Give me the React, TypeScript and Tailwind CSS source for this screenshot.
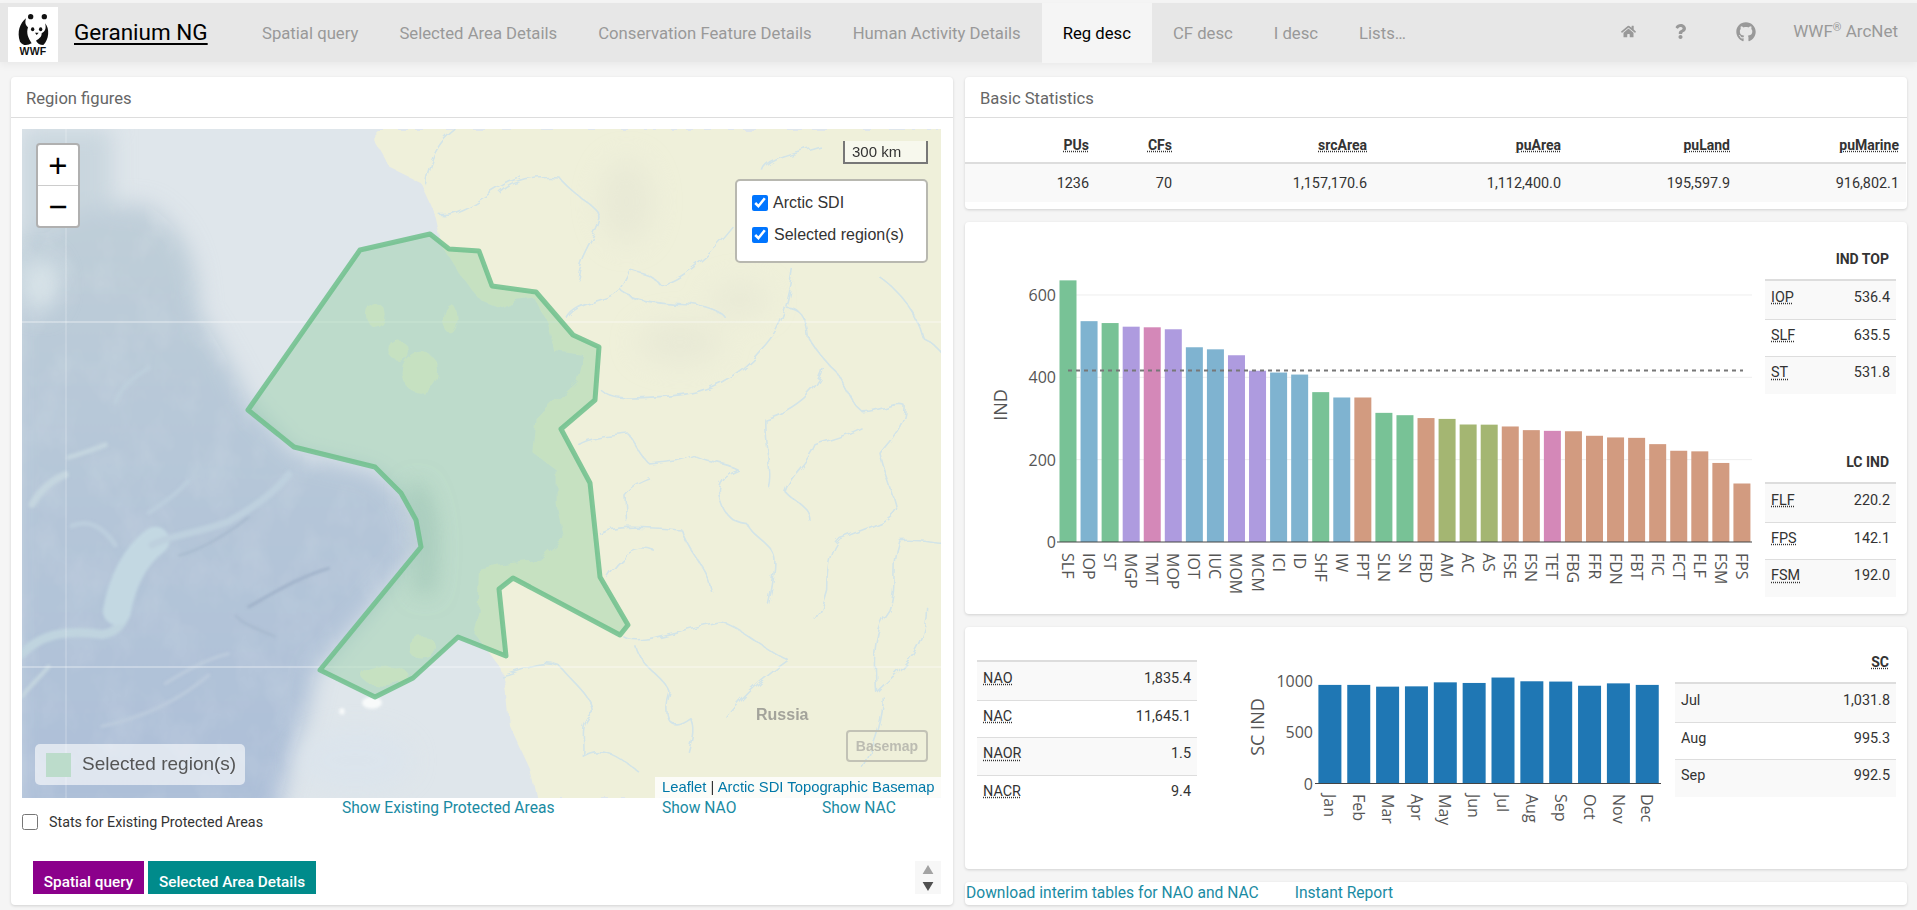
import { FaGithub, FaHome, FaQuestion } from 'react-icons/fa'

const navItems = ['Spatial query', 'Selected Area Details', 'Conservation Feature Details', 'Human Activity Details', 'Reg desc', 'CF desc', 'I desc', 'Lists…']

const G = '#78c296'
const B = '#7fb3d0'
const P = '#ae9bdf'
const K = '#d488b8'
const S = '#d29b80'
const O = '#a4b672'

const indBars: [string, number, string][] = [
  ['SLF', 635.5, G], ['IOP', 536.4, B], ['ST', 531.8, G], ['MGP', 523, P], ['TMT', 521.5, K], ['MOP', 516.7, P],
  ['IOT', 473, B], ['IUC', 468, B], ['MOM', 453.6, P], ['MCM', 416, P], ['ICI', 411.6, B], ['ID', 406.7, B],
  ['SHF', 364, G], ['IW', 351, B], ['FPT', 351, S], ['SLN', 313.7, G], ['SN', 308, G], ['FBD', 301, S],
  ['AM', 299, O], ['AC', 285.4, O], ['AS', 285, O], ['FSE', 280.6, S], ['FSN', 271.7, S], ['TET', 270, K],
  ['FBG', 269, S], ['FFR', 258, S], ['FDN', 254, S], ['FBT', 253, S], ['FIC', 237.7, S], ['FCT', 221.6, S],
  ['FLF', 220.2, S], ['FSM', 192, S], ['FPS', 142.1, S],
]

const months: [string, number][] = [
  ['Jan', 960], ['Feb', 960], ['Mar', 943], ['Apr', 946], ['May', 985], ['Jun', 979],
  ['Jul', 1031.8], ['Aug', 995.3], ['Sep', 992.5], ['Oct', 952], ['Nov', 975], ['Dec', 960],
]

const statCols = [
  ['PUs', '1236'], ['CFs', '70'], ['srcArea', '1,157,170.6'], ['puArea', '1,112,400.0'], ['puLand', '195,597.9'], ['puMarine', '916,802.1'],
]

const selected = '360,250 430,234 449,249 479,251 492,286 536,292 573,335 599,347 595,400 561,429 590,483 600,577 628,625 620,635 513,578 499,589 506,656 458,637 413,678 375,697 320,670 421,547 416,520 401,493 375,467 294,447 248,410'

const west = 'translate(22 129) scale(0.3333 0.4266)'
const east = 'translate(500 129) scale(0.3333 0.4266)'

const rivers = [
  'M0,150 C40,120 100,110 180,115 C220,160 300,180 300,210 C290,250 240,290 230,350',
  'M200,445 C230,400 320,410 360,375 C380,400 470,410 560,412 C620,415 670,430 680,445',
  'M360,375 L390,330 C420,340 460,340 480,365 C540,360 640,290 700,230',
  'M790,100 C800,70 880,60 960,40',
  'M300,610 C340,640 420,630 520,625 C620,620 720,580 780,520 C830,480 860,440 880,330',
  'M860,420 C900,420 920,440 925,490 C950,520 980,550 1010,570 C1040,610 1050,640 1090,665 C1140,665 1190,640 1215,650 C1220,690 1170,730 1140,760 C1150,800 1180,850 1190,890 C1170,920 1120,930 1020,960 C980,990 980,1060 980,1080 C970,1110 960,1130 945,1150',
  'M235,740 C280,720 340,720 385,715 C410,740 420,770 450,785 C500,780 540,780 580,765 C620,785 670,780 715,800 C680,810 650,830 660,860 C670,900 690,920 740,925 C760,960 820,970 825,1010 C825,1050 815,1080 805,1115',
  'M380,920 L375,860 C400,835 420,830 450,820',
  'M300,950 C340,930 400,930 545,940 C560,990 620,1020 635,1085',
  'M320,1050 C350,1010 400,970 465,990',
  'M970,560 C960,610 880,660 795,680 C790,740 820,800 805,840',
  'M1085,700 C1040,720 980,730 945,740 C920,790 870,810 855,850 C890,880 930,880 930,920',
  'M370,1190 C420,1215 540,1170 660,1155 C720,1165 790,1220 865,1245 C820,1270 750,1310 680,1380',
  'M410,1215 C430,1270 490,1280 510,1320 C490,1370 500,1420 570,1380 C590,1410 570,1440 565,1460',
  'M0,1280 C60,1270 120,1240 180,1260 C220,1300 280,1330 280,1370 C230,1400 260,1440 250,1470 C310,1440 370,1480 420,1510',
  'M1200,965 C1260,960 1320,975 1330,970 M1200,965 C1170,1030 1200,1070 1170,1130 C1130,1170 1120,1230 1130,1320 C1160,1290 1280,1240 1280,1120 M1150,1330 C1150,1380 1130,1430 1090,1500',
  'M1130,340 C1200,380 1250,430 1270,490 C1300,500 1320,520 1330,530',
  'M-224,130 C-204,30 -144,10 -134,0 M-184,200 C-104,210 -4,120 66,115',
]

const ridges: [string, string, number][] = [
  ['M0,1230 C50,1190 120,1170 240,1185 C290,1180 320,1150 310,1100', '#c0d4df', 9],
  ['M285,1130 C300,1060 340,1000 400,965', '#c3d8e2', 28],
  ['M390,975 C450,950 520,950 620,920 C690,890 760,850 800,810', '#bed0de', 7],
  ['M30,880 C60,840 100,820 130,810', '#c4d5df', 7],
  ['M140,770 C180,760 220,750 250,740', '#c4d5df', 5],
  ['M380,900 C420,880 470,850 500,825', '#bccedd', 4],
  ['M0,1330 C30,1300 60,1280 80,1260', '#c4d5df', 4],
  ['M150,930 C200,915 240,930 280,975', '#bccedd', 5],
  ['M680,1120 C750,1090 830,1050 920,1030', '#9caec6', 2.5],
  ['M430,1300 C490,1270 560,1240 620,1230', '#bdccdd', 3],
  ['M240,1400 C360,1380 470,1340 560,1280', '#bdccdd', 3],
  ['M640,1140 C660,1160 700,1170 760,1190', '#a3b5ca', 1.5],
  ['M470,1000 C520,990 600,960 680,910', '#a0b3c8', 1.5],
  ['M280,640 C300,600 340,580 380,560', '#bdcfdc', 4],
]

function WwfLogo() {
  return (
    <div className="w-[50px] h-[55px] bg-white shrink-0">
      <svg viewBox="0 0 50 55" className="w-full h-full">
        <g transform="translate(-8 -7) scale(0.3333)" fill="#111">
          <circle cx="92" cy="50" r="8" />
          <circle cx="133" cy="50" r="8" />
          <path d="M78,55 C60,70 50,95 60,125 C70,140 85,135 95,130 C85,115 78,100 84,82 C75,75 75,65 78,55 Z" />
          <path d="M125,100 C135,95 140,85 135,70 C150,85 147,120 130,135 C120,135 112,130 108,122 C120,115 125,110 125,100 Z" />
          <ellipse cx="98" cy="88" rx="5" ry="6" />
          <ellipse cx="122" cy="88" rx="5" ry="6" />
          <path d="M105,98 L116,98 L110,105 Z" />
        </g>
        <text x="25" y="48" textAnchor="middle" fontSize="10.5" fontWeight="700" fill="#111" fontFamily="Liberation Sans, sans-serif" letterSpacing="0.2">WWF</text>
      </svg>
    </div>
  )
}

function NavBar() {
  return (
    <div className="mt-[3px] h-[59px] bg-[#e7e7e7] shadow-[0_3px_8px_rgba(0,0,0,0.05)] flex items-stretch pl-2 pr-[19px]">
      <div className="pt-1">
        <WwfLogo />
      </div>
      <div className="ml-4 w-[155px] pt-[13px] text-[22.5px] leading-[33px] text-black underline underline-offset-[3px] whitespace-nowrap">Geranium NG</div>
      <div className="flex gap-[1px] ml-[13px] text-[16.7px]">
        {navItems.map((n) => (
          <div
            key={n}
            className={n === 'Reg desc'
              ? 'px-[21px] h-[60px] pt-[18px] text-black bg-[#f5f5f5] whitespace-nowrap'
              : 'px-5 pt-[18px] text-[#999999] whitespace-nowrap'}
          >
            {n}
          </div>
        ))}
      </div>
      <div className="ml-auto flex items-center pb-[2px] text-[#999999]">
        <FaHome className="text-[15px] mr-[37px]" />
        <FaQuestion className="text-[15px] mr-[48px]" />
        <FaGithub className="text-[20px] mr-[37px]" />
        <span className="whitespace-nowrap text-[17px]">WWF<sup className="text-[11px]">®</sup> ArcNet</span>
      </div>
    </div>
  )
}

function MapArt() {
  return (
    <svg viewBox="22 129 919 669" className="absolute inset-0 w-full h-full">
      <defs>
        <linearGradient id="deep" x1="0" y1="0" x2="0" y2="1">
          <stop offset="0" stopColor="#c0cfd9" />
          <stop offset="0.35" stopColor="#b7c8d8" />
          <stop offset="1" stopColor="#adbfd8" />
        </linearGradient>
        <filter id="soft" filterUnits="userSpaceOnUse" x="0" y="100" width="1000" height="720"><feGaussianBlur stdDeviation="11" /></filter>
        <filter id="softer" filterUnits="userSpaceOnUse" x="0" y="100" width="1000" height="720"><feGaussianBlur stdDeviation="1.4" /></filter>
        <filter id="hill" filterUnits="userSpaceOnUse" x="0" y="100" width="1000" height="720"><feGaussianBlur stdDeviation="14" /></filter>
        <filter id="edge" filterUnits="userSpaceOnUse" x="0" y="100" width="1000" height="720"><feGaussianBlur stdDeviation="0.6" /></filter>
        <filter id="wiggle" filterUnits="userSpaceOnUse" x="0" y="100" width="1000" height="720">
          <feTurbulence type="fractalNoise" baseFrequency="0.07" numOctaves="2" seed="4" />
          <feDisplacementMap in="SourceGraphic" scale="9" />
        </filter>
        <filter id="relief" filterUnits="userSpaceOnUse" x="0" y="100" width="1000" height="720">
          <feTurbulence type="fractalNoise" baseFrequency="0.03 0.02" numOctaves="4" seed="11" />
          <feColorMatrix values="0 0 0 0 1  0 0 0 0 1  0 0 0 0 1  1.6 0 0 0 -0.62" />
        </filter>
        <clipPath id="deepClip">
          <path transform={west} d="M-30,260 L80,240 C150,180 300,170 380,180 C480,230 530,300 530,430 C580,490 640,570 680,640 L820,760 L1050,800 C1150,850 1190,900 1190,980 L1040,1130 L880,1270 C860,1380 800,1480 760,1620 L-30,1620 Z" />
        </clipPath>
      </defs>
      <rect x="22" y="129" width="919" height="669" fill="#dfe6eb" />
      <g filter="url(#soft)">
        <rect x="22" y="129" width="90" height="110" fill="#c9d6de" />
        <g transform={west}>
          <path d="M-30,260 L80,240 C150,180 300,170 380,180 C480,230 530,300 530,430 C580,490 640,570 680,640 L820,760 L1050,800 C1150,850 1190,900 1190,980 L1040,1130 L880,1270 C860,1380 800,1480 760,1620 L-30,1620 Z" fill="url(#deep)" />
        </g>
      </g>
      <g clipPath="url(#deepClip)" opacity="0.13">
        <rect x="22" y="129" width="500" height="669" filter="url(#relief)" />
      </g>
      <g filter="url(#soft)">
        <g transform={west}>
          <ellipse cx="55" cy="365" rx="55" ry="65" fill="#d8e3e8" />
          <ellipse cx="1000" cy="1480" rx="170" ry="70" fill="#dbe4ec" />
          <path d="M1170,840 C1220,880 1225,980 1205,1090" fill="none" stroke="#b4c6cc" strokeWidth="18" vectorEffect="non-scaling-stroke" />
        </g>
      </g>
      <g filter="url(#softer)">
        <g transform={west} fill="none" strokeLinecap="round">
          {ridges.map(([d, c, w], i) => (
            <path key={i} d={d} stroke={c} strokeWidth={w} vectorEffect="non-scaling-stroke" />
          ))}
        </g>
      </g>
      <g filter="url(#softer)">
        <g transform={west} fill="#f8fafa">
          <ellipse cx="1050" cy="1345" rx="30" ry="14" />
          <ellipse cx="960" cy="1365" rx="8" ry="8" />
        </g>
      </g>
      <g filter="url(#wiggle)">
        <g transform={east}>
          <path
            d="M-374,0 L-374,30 L-330,90 L-240,125 L-190,210 L-170,280 L-130,330 L-60,400 L0,420 L50,400 L100,395 L140,450 L160,520 L250,530 L230,590 L160,640 L110,680 L100,760 L170,800 L170,880 L190,960 L120,1010 L0,1020 L-60,1030 L-64,1130 L-80,1180 L-20,1240 L0,1260 L20,1320 L30,1400 L90,1500 L110,1568 L1330,1568 L1330,0 Z"
            fill="#eff0da"
          />
        </g>
        <g transform={west} fill="#eff0da">
          <ellipse cx="1060" cy="435" rx="28" ry="28" />
          <ellipse cx="1285" cy="445" rx="22" ry="34" />
          <ellipse cx="1130" cy="520" rx="28" ry="24" />
          <ellipse cx="1195" cy="570" rx="56" ry="48" />
          <ellipse cx="1200" cy="1215" rx="42" ry="26" />
          <ellipse cx="1090" cy="1282" rx="70" ry="24" />
        </g>
      </g>
      <g filter="url(#hill)" opacity="0.5">
        <g transform={east} fill="#e2e3d2">
          <ellipse cx="540" cy="500" rx="130" ry="50" />
          <ellipse cx="380" cy="170" rx="80" ry="100" />
          <ellipse cx="720" cy="400" rx="90" ry="40" />
        </g>
      </g>
      <g filter="url(#wiggle)">
        <g transform={east} fill="none" stroke="#d2e4e8" strokeWidth="1.6" strokeLinejoin="round">
          {rivers.map((d, i) => (
            <path key={i} d={d} vectorEffect="non-scaling-stroke" />
          ))}
        </g>
      </g>
      <g stroke="#ffffff" strokeOpacity="0.4" strokeWidth="1.5">
        <line x1="22" y1="322" x2="941" y2="322" />
        <line x1="22" y1="667" x2="941" y2="667" />
        <line x1="66" y1="129" x2="66" y2="798" strokeOpacity="0.22" />
      </g>
      <polygon points={selected} filter="url(#edge)" fill="#8fcda0" fillOpacity="0.42" stroke="#6fc08c" strokeOpacity="0.85" strokeWidth="5" strokeLinejoin="round" />
    </svg>
  )
}

function MapPanel() {
  return (
    <div className="relative h-[669px] overflow-hidden bg-[#dfe6eb] font-['Liberation_Sans',sans-serif]">
      <MapArt />
      <div className="absolute left-[14px] top-[14px] w-11 h-[85px] rounded border-2 border-[#b0b0b0] bg-white flex flex-col text-black">
        <div className="h-[41px] border-b border-[#ccc] flex items-center justify-center text-[33px] leading-none">+</div>
        <div className="flex-1 flex items-center justify-center text-[33px] leading-none">−</div>
      </div>
      <div className="absolute left-[821px] top-3 w-[85px] h-[23px] border-2 border-t-0 border-[#777] bg-white/50 pl-[7px] text-[15px] leading-[21px] text-[#333]">300 km</div>
      <div className="absolute left-[713px] top-[50px] w-[193px] h-[84px] rounded-[5px] border-2 border-[#b8b8b0] bg-white pl-[15px] pt-[11px] text-base text-[#333]">
        <label className="flex items-center h-[21px] gap-[5px]">
          <input type="checkbox" checked readOnly className="w-4 h-4" />
          Arctic SDI
        </label>
        <label className="flex items-center h-[21px] mt-[11px] gap-[6px]">
          <input type="checkbox" checked readOnly className="w-4 h-4" />
          Selected region(s)
        </label>
      </div>
      <div className="absolute left-[734px] top-[574px] text-base font-bold text-[#a3a39b]">Russia</div>
      <div className="absolute left-[824px] top-[601px] w-[82px] h-8 rounded border-2 border-[#c2c2b6] flex items-center justify-center text-sm font-bold text-[#bcbcb2]">Basemap</div>
      <div className="absolute left-[13px] top-[615px] w-[210px] h-[41px] rounded-[5px] bg-white/60 flex items-center pl-[11px] text-[19px] text-[#555]">
        <span className="w-[25px] h-[24px] bg-[#bcdccb] mr-[11px]" />
        Selected region(s)
      </div>
      <div className="absolute right-0 bottom-0 w-[286px] h-[21px] bg-white/80 pl-[7px] text-[14.8px] leading-[21px] text-[#333] whitespace-nowrap">
        <span className="text-[#0078a8]">Leaflet</span> | <span className="text-[#0078a8]">Arctic SDI Topographic Basemap</span>
      </div>
    </div>
  )
}

function Panel({ className, children }: { className: string; children: React.ReactNode }) {
  return <div className={`bg-white rounded shadow-[0_1px_3px_rgba(0,0,0,0.15)] ${className}`}>{children}</div>
}

function PanelHeader({ title }: { title: string }) {
  return <div className="h-[41px] border-b border-[#ddd] pl-[15px] pt-[10px] text-[16.6px] text-[#666]">{title}</div>
}

function KvTable({ title, dotted, rows, dotLabels = true, className = '' }: { title?: string; dotted?: boolean; rows: [string, string][]; dotLabels?: boolean; className?: string }) {
  return (
    <div className={`text-[14.4px] text-[#333] ${className}`}>
      {title && (
        <div className="h-[39px] pt-[9px] pr-[7px] text-right text-sm font-bold">
          <span className={dotted ? 'underline decoration-dotted' : ''}>{title}</span>
        </div>
      )}
      <div className="border-t-2 border-[#ddd]">
        {rows.map(([k, v], i) => (
          <div key={k} className={`h-[37.5px] flex items-center justify-between px-[6px] pb-1 ${i > 0 ? 'border-t border-[#ddd]' : ''} ${i % 2 === 0 ? 'bg-[#f9f9f9]' : ''}`}>
            <span className={dotLabels ? 'underline decoration-dotted' : ''}>{k}</span>
            <span>{v}</span>
          </div>
        ))}
      </div>
    </div>
  )
}

function IndChart() {
  const y0 = 542
  const sc = 0.4117
  return (
    <svg viewBox="985 222 780 392" className="ml-5 w-[780px] h-[392px] shrink-0" fontFamily="Open Sans, sans-serif" fill="#555">
      {[200, 400, 600].map((v) => (
        <line key={v} x1="1060" x2="1752" y1={y0 - v * sc} y2={y0 - v * sc} stroke="#eeeeee" />
      ))}
      {indBars.map(([n, v, c], i) => {
        const x = 1059.5 + i * 21.06
        return <rect key={n} x={x} y={y0 - v * sc} width="17" height={v * sc} fill={c} />
      })}
      <line x1="1068" x2="1743" y1="370.5" y2="370.5" stroke="#777" strokeWidth="2" strokeDasharray="4 4" />
      <line x1="1057" x2="1752" y1={y0} y2={y0} stroke="#444" />
      {[0, 200, 400, 600].map((v) => (
        <text key={v} x="1056" y={y0 - v * sc + 6} textAnchor="end" fontSize="16">{v}</text>
      ))}
      {indBars.map(([n], i) => {
        const x = 1068 + i * 21.06
        return <text key={n} x={x} y="553" fontSize="16" dominantBaseline="central" transform={`rotate(90 ${x} 553)`}>{n}</text>
      })}
      <text x="1000" y="405" fontSize="18" textAnchor="middle" dominantBaseline="central" transform="rotate(-90 1000 405)">IND</text>
    </svg>
  )
}

function ScChart() {
  const y0 = 783.5
  const sc = 0.1027
  return (
    <svg viewBox="1225 627 450 242" className="w-[450px] h-[242px] shrink-0" fontFamily="Open Sans, sans-serif" fill="#555">
      {months.map(([m, v], i) => (
        <rect key={m} x={1318.4 + i * 28.85} y={y0 - v * sc} width="23" height={v * sc} fill="#1f77b4" />
      ))}
      <line x1="1315" x2="1661" y1={y0} y2={y0} stroke="#444" />
      {[0, 500, 1000].map((v) => (
        <text key={v} x="1313" y={y0 - v * sc + 6} textAnchor="end" fontSize="16">{v}</text>
      ))}
      {months.map(([m], i) => {
        const x = 1330 + i * 28.85
        return <text key={m} x={x} y="794" fontSize="16" dominantBaseline="central" transform={`rotate(90 ${x} 794)`}>{m}</text>
      })}
      <text x="1257" y="727" fontSize="18" textAnchor="middle" dominantBaseline="central" transform="rotate(-90 1257 727)">SC IND</text>
    </svg>
  )
}

export default function App() {
  return (
    <div className="h-[910px] overflow-hidden bg-[#f5f5f5] font-['Roboto',sans-serif] text-base">
      <NavBar />
      <div className="flex gap-3 pl-[11px] pt-[15px]">
        <Panel className="w-[942px] h-[828px] flex flex-col">
          <PanelHeader title="Region figures" />
          <div className="pl-[11px] pr-3 pt-[11px]">
            <MapPanel />
            <div className="flex h-[63px] text-[15.6px] leading-5 text-[#1a8ba3]">
              <label className="w-[320px] flex items-start pt-[14px] text-[14.3px] text-[#333]">
                <input type="checkbox" readOnly className="w-4 h-4 mr-[11px] mt-[2px]" />
                Stats for Existing Protected Areas
              </label>
              <span className="w-[320px]">Show Existing Protected Areas</span>
              <span className="w-[160px]">Show NAO</span>
              <span>Show NAC</span>
            </div>
            <div className="flex h-[33px] text-[15.3px]">
              <div className="ml-[11px] w-[111px] bg-[#8b008b] text-white font-medium text-center pt-[10px] leading-[22px]">Spatial query</div>
              <div className="ml-1 w-[168px] bg-[#008b8b] text-white font-medium text-center pt-[10px] leading-[22px]">Selected Area Details</div>
              <div className="ml-auto w-[26px] bg-[#f7f7f7] flex flex-col items-center justify-center gap-2">
                <svg viewBox="0 0 12 10" className="w-3 h-[9px]"><path d="M6 0 L12 10 L0 10 Z" fill="#a3a3a3" /></svg>
                <svg viewBox="0 0 12 10" className="w-3 h-[9px]"><path d="M0 0 L12 0 L6 10 Z" fill="#505050" /></svg>
              </div>
            </div>
          </div>
        </Panel>
        <div className="w-[942px] flex flex-col gap-[13px]">
          <Panel className="h-[132px]">
            <PanelHeader title="Basic Statistics" />
            <div className="grid grid-cols-[131px_83px_195px_194px_169px_169px] text-[14.4px] text-right text-[#333]">
              {statCols.map(([h]) => (
                <div key={h} className="h-[46px] border-b-2 border-[#ddd] pt-[17px] pr-[7px] text-sm font-bold">
                  <span className="underline decoration-dotted">{h}</span>
                </div>
              ))}
              {statCols.map(([h, v]) => (
                <div key={h} className="h-[38px] bg-[#f9f9f9] pt-[9px] pr-[7px]">{v}</div>
              ))}
            </div>
          </Panel>
          <Panel className="h-[392px] flex">
            <IndChart />
            <div className="w-[131px] shrink-0">
              <KvTable title="IND TOP" className="mt-[18px]" rows={[['IOP', '536.4'], ['SLF', '635.5'], ['ST', '531.8']]} />
              <KvTable title="LC IND" className="mt-[49.5px]" rows={[['FLF', '220.2'], ['FPS', '142.1'], ['FSM', '192.0']]} />
            </div>
          </Panel>
          <Panel className="h-[242px] flex">
            <KvTable className="ml-3 mr-7 w-[220px] mt-[33px] shrink-0" rows={[['NAO', '1,835.4'], ['NAC', '11,645.1'], ['NAOR', '1.5'], ['NACR', '9.4']]} />
            <ScChart />
            <KvTable title="SC" dotted dotLabels={false} className="w-[221px] mt-[16px] shrink-0" rows={[['Jul', '1,031.8'], ['Aug', '995.3'], ['Sep', '992.5']]} />
          </Panel>
          <Panel className="h-[23px] flex text-[15.6px] text-[#1a8ba3] leading-[22px] pl-[1px]">
            <span>Download interim tables for NAO and NAC</span>
            <span className="ml-9">Instant Report</span>
          </Panel>
        </div>
      </div>
    </div>
  )
}
